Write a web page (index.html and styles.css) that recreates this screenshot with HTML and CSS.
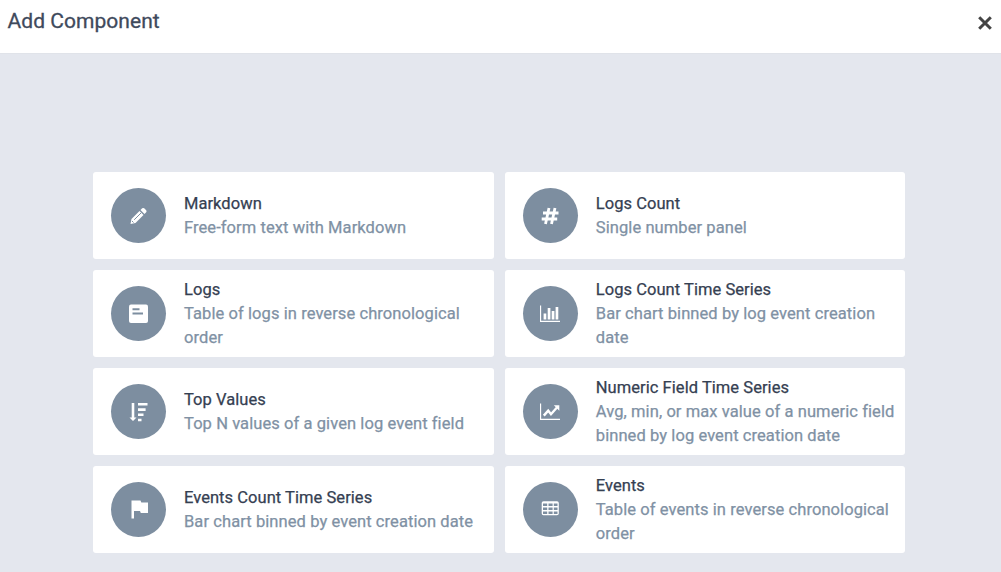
FILE: index.html
```
<!DOCTYPE html>
<html lang="en">
<head>
<meta charset="utf-8">
<title>Add Component</title>
<link rel="stylesheet" href="styles.css">
</head>
<body>
<header class="header">
  <h1 class="title">Add Component</h1>
  <button class="close" aria-label="Close"><svg width="14" height="14" viewBox="0 0 14 14"><path d="M1.200 1.200l11.600 11.600M12.800 1.200L1.200 12.800"/></svg></button>
</header>
<main class="grid">
  <article class="card">
    <div class="icon"><svg viewBox="0 0 20 20"><path d="M1.500 18l1-5 8-8 4 4-8 8zM11.500 4l1.700-1.700q1-.8 2 0l2 2q.8 1 0 2L15.500 8z"/><path class="cut" d="M5.200 13.800l6.800-6.800M3 15l1.500 1.500"/></svg></div>
    <div class="text"><h2>Markdown</h2><p>Free-form text with Markdown</p></div>
  </article>
  <article class="card">
    <div class="icon"><svg viewBox="0 0 20 20"><path class="line hash" d="M9 2L5.500 18M15 2l-3.500 16M3 7h15.500M1.700 13h15.500"/></svg></div>
    <div class="text"><h2>Logs Count</h2><p>Single number panel</p></div>
  </article>
  <article class="card">
    <div class="icon"><svg viewBox="0 0 20 20"><rect x="0" y=".5" width="19" height="18.500" rx="2"/><path class="cut thick" d="M3.500 5.200h7M3.500 9.500h10.500"/></svg></div>
    <div class="text"><h2>Logs</h2><p>Table of logs in reverse chronological order</p></div>
  </article>
  <article class="card">
    <div class="icon"><svg viewBox="0 0 20 20"><path class="line axis" d="M.5 1.500v15.800H20.500"/><path d="M3.600 9.500h2.700V15.500H3.600zM7.700 4h2.700v11.500H7.700zM11.700 7h2.700v8.500h-2.700zM15.600 3h2.700v12.500h-2.700z"/></svg></div>
    <div class="text"><h2>Logs Count Time Series</h2><p>Bar chart binned by log event creation date</p></div>
  </article>
  <article class="card">
    <div class="icon"><svg viewBox="0 0 20 20"><path d="M2.700 1h2.600V15.500h2.200L4 19 .5 15.500h2.200zM9 1h9.500v2.600H9zM9 6.300h7.600v2.600H9zM9 11.500h5.500v2.600H9zM9 16.700h3.500v2.600H9z"/></svg></div>
    <div class="text"><h2>Top Values</h2><p>Top N values of a given log event field</p></div>
  </article>
  <article class="card">
    <div class="icon"><svg viewBox="0 0 20 20"><path class="line axis" d="M.5 1.500v15.800H20.500"/><path class="line trend" d="M3.800 13.600l4.400-5 2.800 3.600 6.600-7.400"/><path d="M13.800 3.300H19.300v5.500z"/></svg></div>
    <div class="text"><h2>Numeric Field Time Series</h2><p>Avg, min, or max value of a numeric field binned by log event creation date</p></div>
  </article>
  <article class="card">
    <div class="icon"><svg viewBox="0 0 20 20"><path d="M2.500 1.500h9l.8 2h6.700V14h-7.200l-.8-2H5v7.500H2.500z"/></svg></div>
    <div class="text"><h2>Events Count Time Series</h2><p>Bar chart binned by event creation date</p></div>
  </article>
  <article class="card">
    <div class="icon"><svg viewBox="0 0 20 20"><path fill-rule="evenodd" d="M3.500 2.200h13.500q1.800 0 1.800 1.800v10.500q0 1.800-1.800 1.800H3.500Q1.700 16.300 1.700 14.500V4q0-1.800 1.800-1.800zM3 4.500v2.600h4.200V4.500zM8.500 4.500v2.600h4.100V4.500zM13.800 4.500v2.600H17.500V4.500zM3 8.500v2.500h4.200V8.500zM8.500 8.500v2.500h4.100V8.500zM13.800 8.500v2.500H17.500V8.500zM3 12.500v2.400h4.200V12.500zM8.500 12.500v2.400h4.100V12.500zM13.800 12.500v2.400H17.500V12.500z"/></svg></div>
    <div class="text"><h2>Events</h2><p>Table of events in reverse chronological order</p></div>
  </article>
</main>
</body>
</html>
```
FILE: styles.css
```
* {
  box-sizing: border-box;
}

body {
  margin: 0;
  height: 572px;
  overflow: hidden;
  background: #e4e7ee;
  font-family: Roboto, "Liberation Sans", sans-serif;
}

.header {
  display: flex;
  justify-content: space-between;
  align-items: flex-start;
  height: 54px;
  padding: 6px 9px 0 7.500px;
  background: #fff;
  border-bottom: 1px solid #e0e3e9;
}

.title {
  margin: 0;
  font-size: 21px;
  line-height: 30px;
  font-weight: 400;
  letter-spacing: 0.050px;
  -webkit-text-stroke: 0.300px;
  color: #3f4a5c;
}

.close {
  display: flex;
  margin: 10px 0 0;
  padding: 0;
  border: 0;
  background: none;
}

.close svg {
  fill: none;
  stroke: #444;
  stroke-width: 3;
}

.grid {
  display: grid;
  grid-template-columns: 400.500px 400.500px;
  grid-auto-rows: 86.700px;
  gap: 11.300px;
  padding: 118.200px 0 0 93px;
}

.card {
  display: flex;
  align-items: center;
  gap: 18px;
  padding: 0 0 0 18px;
  background: #fff;
  border-radius: 3px;
}

.icon {
  display: flex;
  flex: none;
  align-items: center;
  justify-content: center;
  width: 55px;
  height: 55px;
  border-radius: 50%;
  background: #7d8ea0;
}

.icon svg {
  width: 20px;
  height: 20px;
  fill: #fff;
}

.icon .cut {
  stroke: #7d8ea0;
  stroke-width: 1;
}

.icon .thick {
  stroke-width: 2;
}

.icon .line {
  fill: none;
  stroke: #fff;
}

.icon .hash {
  stroke-width: 2.800;
}

.icon .axis {
  stroke-width: 1.300;
}

.icon .trend {
  stroke-width: 2.400;
}

.text {
  flex: 1;
  padding-top: 0.500px;
  font-size: 16.500px;
  line-height: 23.800px;
  letter-spacing: 0.080px;
  -webkit-text-stroke: 0.250px;
}

.text h2,
.text p {
  margin: 0;
  font-size: inherit;
  font-weight: 400;
}

.text h2 {
  letter-spacing: 0.050px;
  color: #354052;
}

.text p {
  color: #8091a4;
}
```
